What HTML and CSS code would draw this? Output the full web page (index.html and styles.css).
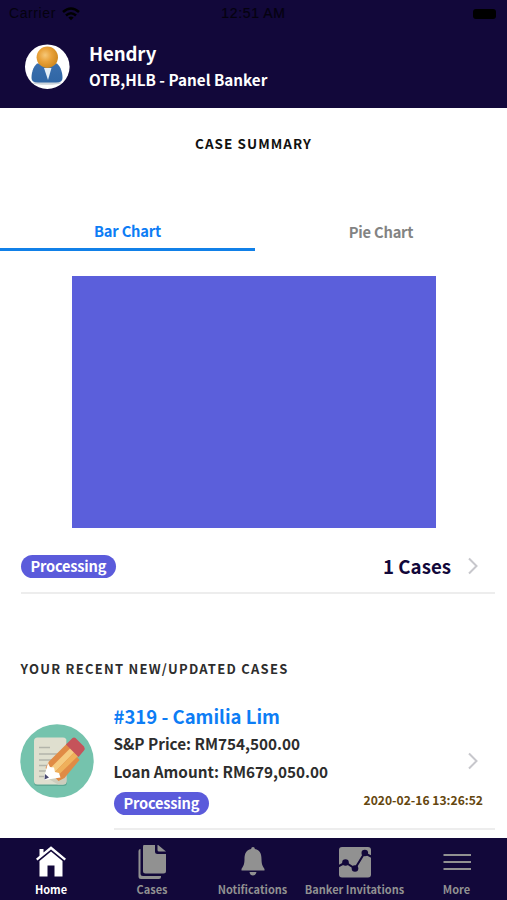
FILE: index.html
```html
<!DOCTYPE html>
<html lang="en">
<head>
    <meta charset="UTF-8">
    <meta name="viewport" content="width=device-width, initial-scale=1.0">
    <title>Home</title>
    <link rel="stylesheet" href="styles.css">
</head>
<body>
    <div class="container">
        <header class="header">
            <div class="status_bar">
                <div class="carrier">
                    <span>Carrier</span>
                    <svg width="18" height="14" viewBox="0 0 18 14" fill="none" stroke="#000" stroke-width="2.6">
                        <path d="M1 5Q9-2 17 5M4 8.500Q9 4 14 8.500"/>
                        <path d="M6.300 10.500Q9 8.500 11.700 10.500L9 13.300z" fill="#000" stroke="none"/>
                    </svg>
                </div>
                <div class="time">12:51 AM</div>
                <div class="battery"></div>
            </div>
            <div class="profile">
                <svg class="avatar" width="46" height="46" viewBox="0 0 46 46">
                    <defs>
                        <radialGradient id="face" cx=".4" cy=".4" r=".6">
                            <stop offset="0" stop-color="#f6c878"/>
                            <stop offset=".5" stop-color="#e9a23a"/>
                            <stop offset="1" stop-color="#d18a20"/>
                        </radialGradient>
                        <linearGradient id="suit" x1="0" y1="0" x2="0" y2="1">
                            <stop offset="0" stop-color="#3a6fae"/>
                            <stop offset="1" stop-color="#2f66a5"/>
                        </linearGradient>
                    </defs>
                    <circle cx="23.300" cy="22.700" r="22.300" fill="#fff"/>
                    <ellipse cx="23" cy="39" rx="14" ry="1.800" fill="#ccd3da"/>
                    <path d="M13 19.500C9 23 7.500 29 7.500 34Q7.500 38.500 14 38.500H32Q38.500 38.500 38.500 34C38.500 29 37 23 33 19.500z" fill="url(#suit)"/>
                    <path d="M20 24L24 36L27.500 24z" fill="#e4eef6"/>
                    <circle cx="23.300" cy="13.300" r="10.700" fill="url(#face)"/>
                </svg>
                <div class="profile_text">
                    <h1>Hendry</h1>
                    <p>OTB,HLB - Panel Banker</p>
                </div>
            </div>
        </header>

        <main class="content">
            <h2 class="summary_title">CASE SUMMARY</h2>
            <div class="tabs">
                <a class="tab active">Bar Chart</a>
                <a class="tab">Pie Chart</a>
            </div>
            <div class="chart"><div class="bar"></div></div>

            <div class="summary_row">
                <span class="badge">Processing</span>
                <span class="count">1 Cases</span>
                <svg class="arrow" width="12" height="18" viewBox="0 0 12 18"><path d="M2 1.500L9.500 9L2 16.500"/></svg>
            </div>

            <h3 class="recent_title">YOUR RECENT NEW/UPDATED CASES</h3>
            <div class="case">
                <svg class="case_icon" width="74" height="74" viewBox="0 0 74 74">
                    <circle cx="37" cy="37" r="36.700" fill="#75c3ad"/>
                    <rect x="14" y="15" width="33" height="47" rx="3.500" fill="#5fa894"/>
                    <rect x="14" y="13.500" width="32.500" height="47" rx="3.500" fill="#dfdfcf"/>
                    <path d="M19 23.500H30M19 30H42M19 36H38M19 41.500H34M19 47H30M19 52.500H27" stroke="#b2b4aa" stroke-width="1.700"/>
                    <path d="M27 54L42 53L46.500 50V57Q46.500 60.500 43 60.500H38z" fill="#cdcdbd"/>
                    <path d="M47 19.500L29 37.500L25.500 44L38.500 57L44.500 54L59.500 36z" fill="#e08b45"/>
                    <path d="M51 23.500L31.500 43L35 48L54.500 28z" fill="#f5cb80"/>
                    <path d="M54.500 28L35 48L38.500 51L58 32z" fill="#efb05b"/>
                    <path d="M52.500 14Q54 12.800 55.500 14L64 22.500Q65.500 25 64 26.500L58.500 33L46 20.500z" fill="#c5535a"/>
                    <path d="M28 39L30 43L34 43.500L35 48L39 49L40.500 53.500L24.500 56L24 53.500z" fill="#fff"/>
                    <path d="M25 50L29 53.500L24.500 55.500z" fill="#494a70"/>
                </svg>
                <div class="case_body">
                    <div class="case_text">
                        <h4>#319 - Camilia Lim</h4>
                        <p>S&amp;P Price: RM754,500.00</p>
                        <p>Loan Amount: RM679,050.00</p>
                        <div class="case_foot">
                            <span class="badge">Processing</span>
                            <span class="date">2020-02-16 13:26:52</span>
                        </div>
                    </div>
                    <svg class="arrow" width="12" height="18" viewBox="0 0 12 18"><path d="M2 1.500L9.500 9L2 16.500"/></svg>
                </div>
            </div>
        </main>

        <nav class="tab_bar">
            <a class="nav_item active">
                <svg width="32" height="36" viewBox="0 0 32 36" fill="currentColor">
                    <path d="M4.500 4H8.500V7.500L16 1.300L31 13.800L29.500 15.600L16 4.500L2.500 15.600L1 13.800L4.500 10.800z"/>
                    <path d="M16 6.500L27.500 16V31.500H19.500V20.500H12.500V31.500H4.500V16z"/>
                </svg>
                <span>Home</span>
            </a>
            <a class="nav_item">
                <svg width="32" height="36" viewBox="0 0 32 36" fill="currentColor">
                    <path d="M4.500 4V28.500Q4.500 31 7 31H25V32Q25 34 23 34H5Q2.500 34 2.500 31.500V6Q2.500 4 4.500 4z"/>
                    <path d="M9 -.500H19V6.500Q19 9 21.500 9H30V26Q30 28.500 27.500 28.500H9.500Q7 28.500 7 26V2Q7 -.500 9 -.500z"/>
                    <path d="M21.500 -.500L30 6.500H23Q21.500 6.500 21.500 5z"/>
                </svg>
                <span>Cases</span>
            </a>
            <a class="nav_item">
                <svg width="32" height="36" viewBox="0 0 32 36" fill="currentColor">
                    <path d="M16 2Q17.800 2 17.900 4.100C23 5.200 24.500 9 24.500 14C24.500 20 26 21.500 27.500 24V25.500H4.500V24C6 21.500 7.500 20 7.500 14C7.500 9 9 5.200 14.100 4.100Q14.200 2 16 2z"/>
                    <path d="M12.500 27H19.500Q19 30.500 16 30.500T12.500 27z"/>
                </svg>
                <span>Notifications</span>
            </a>
            <a class="nav_item">
                <svg width="34" height="36" viewBox="0 0 34 36">
                    <rect x="1" y="2" width="32" height="30.500" rx="3" fill="currentColor"/>
                    <path d="M0 21.500L7.500 17.500L17 23.500L26.500 8L34 12" fill="none" stroke="#12083a" stroke-width="2"/>
                    <g fill="#12083a"><circle cx="7.500" cy="17.500" r="3.300"/><circle cx="17" cy="23.500" r="3.300"/><circle cx="26.800" cy="8" r="3.300"/></g>
                </svg>
                <span>Banker Invitations</span>
            </a>
            <a class="nav_item">
                <svg width="32" height="36" viewBox="0 0 32 36">
                    <path d="M2.500 10H30M2.500 17H30M2.500 24H30" stroke="currentColor" stroke-width="2.200"/>
                </svg>
                <span>More</span>
            </a>
        </nav>
    </div>
</body>
</html>
```
FILE: styles.css
```css
*{margin:0; padding:0; box-sizing:border-box;}
body{
    font-family:"Noto Sans CJK SC", "Noto Sans", sans-serif;
    font-weight:700;
    background-color:#fff;
    color:#2d2d2d;
}
svg{display:block; flex:none;}
h1,h2,h3,h4,p,span,a{white-space:nowrap;}

.container{
    display:flex;
    flex-direction:column;
    width:507px; height:900px;
    overflow:hidden;
}

/* header */
.header{
    flex:none;
    height:108px;
    background-color:#12083a;
    color:#fff;
}
.status_bar{
    display:grid;
    grid-template-columns:1fr auto 1fr;
    align-items:center;
    height:27px;
    padding:0 11px 0 9px;
    font:400 14px/27px "Liberation Sans", sans-serif;
    color:#05020f;
}
.carrier{display:flex; align-items:center; gap:6px; letter-spacing:.6px;}
.time{padding-left:2px; letter-spacing:.65px; -webkit-text-stroke:.2px #05020f;}
.battery{
    justify-self:end;
    width:23px; height:10px;
    border-radius:3px;
    background-color:#000;
}
.profile{display:flex; padding:17px 0 0 24px;}
.profile_text{padding-left:19px;}
.profile h1{margin-top:-1px; font-size:18.600px; line-height:20px; letter-spacing:-.1px;}
.profile p{font-size:15.250px; line-height:20px; padding-top:6px;}

/* summary */
.content{flex:1; min-height:0; overflow:hidden;}
.summary_title{
    padding-top:24px;
    font-size:13.500px; line-height:23px;
    letter-spacing:1.050px;
    text-align:center;
    color:#111;
}
.tabs{display:flex; height:38px; margin-top:58px;}
.tab{
    width:255px;
    padding-top:8px;
    font-size:14.700px; line-height:21px;
    letter-spacing:-.2px;
    text-align:center;
    color:#838383;
}
.tab.active{
    padding-top:7px;
    border-bottom:3px solid #1180e8;
    color:#0d7df5;
}
.tab:last-child{width:252px;}
.chart{padding:25px 71px 0 72px;}
.bar{height:252px; background-color:#5b5fdb;}

.badge{
    padding:0 10px 1px;
    border-radius:12px;
    background-color:#5b5bdb;
    font-size:14.600px; line-height:22px;
    letter-spacing:-.2px;
    color:#fff;
}
.summary_row{
    display:flex;
    align-items:center;
    height:66px;
    margin:0 12px 0 20.500px;
    padding-right:16px;
    padding-top:12px;
    border-bottom:2px solid #ededed;
}
.count{margin-left:auto; padding-right:16px; font-size:18.700px; line-height:24px; color:#12083a;}
.arrow path{fill:none; stroke:#c7c7cc; stroke-width:2;}

/* recent cases */
.recent_title{
    padding:65px 0 0 20.500px;
    font-size:13px; line-height:20px;
    letter-spacing:1.250px;
}
.case{display:flex; padding:25px 12px 0 20px;}
.case_icon{margin-top:19.700px;}
.case_body{
    display:flex;
    flex:1;
    align-items:center;
    height:126px;
    margin-left:19.500px;
    border-bottom:2px solid #ededed;
}
.case_text{flex:1; align-self:flex-start; margin-top:-1px;}
.case_text h4{font-size:18.550px; line-height:26px; color:#0d7df5;}
.case_text p{font-size:15.300px; line-height:28px;}
.case_foot{display:flex; justify-content:space-between; align-items:flex-start; padding-top:7px;}
.date{margin-right:-16px; font-size:12.100px; line-height:15px; color:#65470f;}
.case_body .arrow{margin:0 16px 10px 0;}

/* bottom tab bar */
.tab_bar{
    display:grid;
    grid-template-columns:102px 100px 101px 103px 101px;
    flex:none;
    height:62px;
    background-color:#12083a;
}
.nav_item{
    display:flex;
    flex-direction:column;
    align-items:center;
    padding-top:7px;
    font-size:11px; line-height:16px;
    color:#919191;
}
.nav_item.active{color:#fff;}
```
